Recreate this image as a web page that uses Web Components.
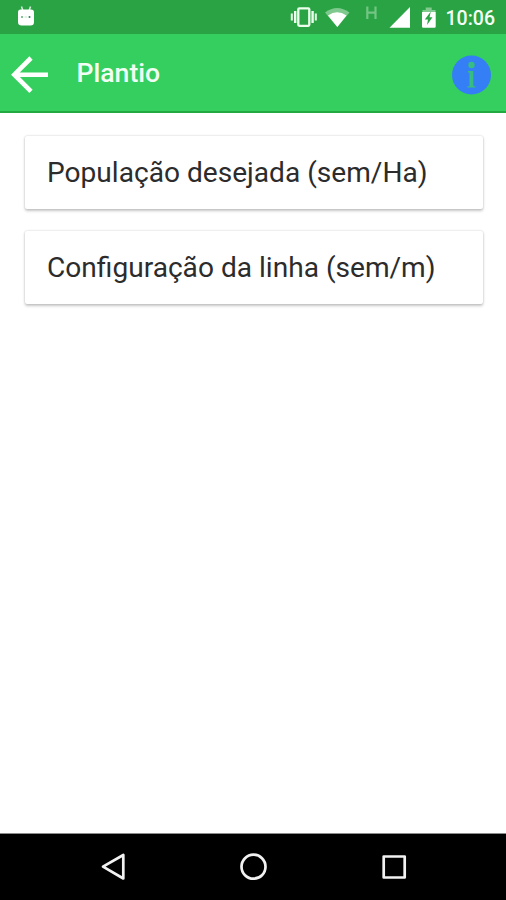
<!DOCTYPE html>
<html lang="pt-BR">
<head>
<meta charset="utf-8">
<title>Plantio</title>
<style>
html,body{margin:0;height:100%}
body{font-family:Roboto,"Liberation Sans",sans-serif;background:#fff;overflow:hidden}
</style>
</head>
<body>
<app-screen>
  <status-bar slot="top" time="10:06"></status-bar>
  <app-bar slot="top">Plantio</app-bar>
  <option-card>População desejada (sem/Ha)</option-card>
  <option-card>Configuração da linha (sem/m)</option-card>
  <nav-bar slot="bottom"></nav-bar>
</app-screen>
<script>
const define = (name, html) => customElements.define(name, class extends HTMLElement {
  constructor() {
    super();
    this.attachShadow({mode: 'open'}).innerHTML = html;
  }
  connectedCallback() {
    const t = this.shadowRoot.querySelector('time');
    if (t) t.textContent = this.getAttribute('time');
  }
});

define('app-screen', `
<style>
:host{display:flex;flex-direction:column;width:506px;height:900px;background:#fff}
main{flex:1;display:flex;flex-direction:column;gap:22px;padding:23px 23px 0 25px}
</style>
<slot name="top"></slot><main><slot></slot></main><slot name="bottom"></slot>`);

define('status-bar', `
<style>
:host{display:flex;align-items:center;height:34px;background:#2aa344;color:#fff;padding:0 11px 0 17px;box-sizing:border-box}
svg{display:block;flex:none;height:34px}
.gap{flex:1}
time{font-size:19.5px;font-weight:500;line-height:34px;padding-top:3px;margin-left:10px;color:#f4fff5}
</style>
<svg width="18" viewBox="17 0 18 34" fill="#fff"><path d="M21.5 6.500l1.300 4M30.500 6.500l-1.300 4" stroke="#d8efdc" stroke-width="1.500"/><path d="M20.500 9.500H31q3 0 3 3V22q0 3.500-3.500 3.500H21.500Q18 25.500 18 22v-9.500q0-3 2.500-3z"/><circle cx="22" cy="17" r="1" fill="#5cae72"/><circle cx="29.500" cy="17" r="1" fill="#237d55"/><path d="M24.500 17h2.500" stroke="#bfe5c6"/></svg>
<span class="gap"></span>
<svg width="146" viewBox="290 0 146 34">
<g fill="none" stroke="#eaffec"><rect x="298.300" y="8.300" width="11" height="17.500" rx="1" stroke-width="2.300"/><path d="M295.200 11v12M312.600 11v12" stroke-width="2.400"/><path d="M291.800 13.500v7M315.800 13.500v7" stroke-width="2"/></g>
<path d="M325 12.500Q337 3.500 349.500 12.500L337.300 27z" fill="#7fc98e"/><path d="M328 15.500Q337 9 346.500 15.500L337.300 27z" fill="#fff"/>
<path d="M367.300 6.500v12.500M375.500 6.500v12.500M367.300 12.700h8.200" stroke="#73c584" stroke-width="2.200" fill="none"/>
<path d="M389.500 27.800H410V7z" fill="#fff"/>
<path d="M422.500 12v-2h3.200V7.500h6V10h3.800v2z" fill="#82ca90"/><path d="M422 12h13.700v14.500q0 1.300-1.300 1.300h-11.100q-1.300 0-1.300-1.300z" fill="#fff"/><path d="M430.800 11.500l-6 8h3.200l-1 5.500 5.500-7.700h-3z" fill="#2aa344"/>
</svg>
<time></time>`);

define('app-bar', `
<style>
:host{display:flex;align-items:center;height:79px;box-sizing:border-box;background:#35cf60;border-bottom:2px solid #23a941;color:#f2fff4;padding:0 15px 0 11px}
h1{margin:0 auto 0 27.500px;font-size:26.600px;font-weight:500;line-height:32px}
svg{display:block;flex:none}
</style>
<svg width="38" height="77" viewBox="11 34 38 77"><path d="M48 74.700H15M31 58L14.300 74.700 31 91.300" fill="none" stroke="#fff" stroke-width="4.600"/></svg>
<h1><slot></slot></h1>
<svg width="40" height="77" viewBox="451 34 40 77"><circle cx="471.500" cy="75" r="19.500" fill="#347ff5"/><g fill="#37bd83"><circle cx="471.500" cy="65" r="3.200"/><path d="M468 71h5.300v15.300h2v1.200h-7.800v-1.200h2V72.500H468z"/></g></svg>`);

define('option-card', `
<style>
:host{display:flex;align-items:center;height:73px;box-sizing:border-box;padding:1.500px 22px 0;border-radius:2px;background:#fff;color:#2c2c2c;font-size:28.100px;line-height:34px;white-space:nowrap;box-shadow:0 1.500px 3px rgba(0,0,0,.22),0 0 2px rgba(0,0,0,.15)}
</style>
<span><slot></slot></span>`);

define('nav-bar', `
<style>
:host{display:block;height:67px;background:#000;box-sizing:border-box;border-top:1px solid #8b8b8b}
svg{display:block}
</style>
<svg width="506" height="66" viewBox="0 834 506 66" fill="none" stroke="#f2f2f2" stroke-width="2.700" stroke-linejoin="round"><path d="M123.300 855v23.500L103 866.700z"/><circle cx="253.500" cy="866.700" r="12"/><rect x="383.700" y="856.500" width="21" height="21"/></svg>`);
</script>
</body>
</html>
